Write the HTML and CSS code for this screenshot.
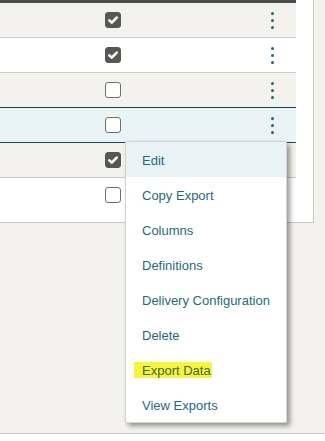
FILE: index.html
```html
<!DOCTYPE html>
<html lang="en">
<head>
  <meta charset="UTF-8">
  <meta name="viewport" content="width=device-width, initial-scale=1.0">
  <title>Exports</title>
  <link rel="stylesheet" href="styles.css">
</head>
<body>
  <div class="page">
    <div class="panel">
      <div class="grid">
        <div class="row shade">
          <span class="cell-check"><span class="box checked"><svg viewBox="0 0 16 16"><path d="M3.8 8.4 L6.6 11 L12.2 5.2" /></svg></span></span>
          <span class="kebab"><i></i><i></i><i></i></span>
        </div>
        <div class="row">
          <span class="cell-check"><span class="box checked"><svg viewBox="0 0 16 16"><path d="M3.8 8.4 L6.6 11 L12.2 5.2" /></svg></span></span>
          <span class="kebab"><i></i><i></i><i></i></span>
        </div>
        <div class="row shade before-active">
          <span class="cell-check"><span class="box"></span></span>
          <span class="kebab"><i></i><i></i><i></i></span>
        </div>
        <div class="row active">
          <span class="cell-check"><span class="box"></span></span>
          <span class="kebab"><i></i><i></i><i></i></span>
        </div>
        <div class="row shade">
          <span class="cell-check"><span class="box checked"><svg viewBox="0 0 16 16"><path d="M3.8 8.4 L6.6 11 L12.2 5.2" /></svg></span></span>
          <span class="kebab hidden"></span>
        </div>
        <div class="row last">
          <span class="cell-check"><span class="box"></span></span>
          <span class="kebab hidden"></span>
        </div>
      </div>
    </div>
    <div class="below"></div>
    <div class="footer"></div>

    <ul class="menu">
      <li class="focus">Edit</li>
      <li>Copy Export</li>
      <li>Columns</li>
      <li>Definitions</li>
      <li>Delivery Configuration</li>
      <li>Delete</li>
      <li><mark>Export Data</mark></li>
      <li>View Exports</li>
    </ul>
  </div>
</body>
</html>
```

FILE: styles.css
```css
body {
  margin: 0;
  padding: 0;
  background: #f3f2ef;
  font-family: "Liberation Sans", Arial, sans-serif;
}
.page {
  position: relative;
  width: 325px;
  height: 441px;
  overflow: hidden;
}
.panel {
  width: 313px;
  height: 222px;
  background: #fff;
  border-right: 1px solid #c9c8c5;
  border-bottom: 1px solid #c9c8c5;
}
.grid {
  width: 296px;
  border-top: 3px solid #4b4b49;
}
.row {
  display: flex;
  align-items: center;
  height: 34px;
  background: #fff;
  border-bottom: 1px solid #cbc9c5;
}
.row.shade {
  background: #f3f2ef;
}
.row.before-active {
  border-bottom: 1px solid #0f4d58;
}
.row.active {
  background: #eaf3f6;
  border-bottom: 1px solid #0f4d58;
}
.row.last {
  border-bottom: none;
}
.cell-check {
  padding-left: 105px;
  width: 166px;
  display: flex;
}
.box {
  width: 16px;
  height: 16px;
  box-sizing: border-box;
  border: 1.5px solid #6f6f6c;
  border-radius: 3px;
  background: #fff;
  display: flex;
  align-items: center;
  justify-content: center;
}
.box.checked {
  background: #575754;
  border-color: #575754;
}
.box svg {
  width: 14px;
  height: 14px;
}
.box path {
  fill: none;
  stroke: #fff;
  stroke-width: 3;
  stroke-linecap: round;
  stroke-linejoin: round;
}
.kebab {
  display: flex;
  flex-direction: column;
  gap: 4px;
  width: 3px;
}
.kebab i {
  display: block;
  width: 3px;
  height: 3px;
  border-radius: 50%;
  background: #1a6a7e;
}
.below {
  height: 210px;
}
.footer {
  height: 8px;
  background: #fff;
  border-top: 1px solid #c9c8c5;
}
.menu {
  position: absolute;
  left: 125px;
  top: 141px;
  width: 160px;
  margin: 0;
  padding: 0;
  list-style: none;
  background: #fff;
  border: 1px solid #d4d4d2;
  border-radius: 2px;
  box-shadow: 3px 3px 5px rgba(0, 0, 0, 0.4);
}
.menu li {
  height: 34px;
  padding-top: 1px;
  line-height: 35px;
  padding-left: 16px;
  font-size: 13px;
  color: #1d6b80;
  white-space: nowrap;
}
.menu li.focus {
  background: #e9f3f6;
}
.menu mark {
  background: #f6f43c;
  color: #3e6a3a;
  padding: 1px 1px 0 8px;
  margin-left: -8px;
}
```
